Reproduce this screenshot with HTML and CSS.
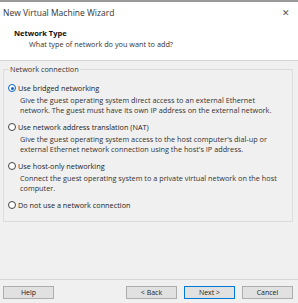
FILE: index.html
```html
<!DOCTYPE html>
<html lang="en">
<head>
    <meta charset="UTF-8">
    <title>New Virtual Machine Wizard</title>
    <link rel="stylesheet" href="styles.css">
</head>
<body>
<div class="wizard">
    <div class="top">
        <div class="titlebar">
            <span class="title">New Virtual Machine Wizard</span>
            <span class="close">&#x2715;</span>
        </div>
        <div class="header">
            <div class="heading">Network Type</div>
            <div class="subheading">What type of network do you want to add?</div>
        </div>
    </div>

    <div class="body">
        <fieldset class="group">
            <legend>Network connection</legend>

            <div class="option">
                <label class="radio-row"><span class="radio checked"></span>Use bridged networking</label>
                <p class="desc">Give the guest operating system direct access to an external Ethernet network. The guest must have its own IP address on the external network.</p>
            </div>
            <div class="option">
                <label class="radio-row"><span class="radio"></span>Use network address translation (NAT)</label>
                <p class="desc">Give the guest operating system access to the host computer's dial-up or external Ethernet network connection using the host's IP address.</p>
            </div>
            <div class="option">
                <label class="radio-row"><span class="radio"></span>Use host-only networking</label>
                <p class="desc">Connect the guest operating system to a private virtual network on the host computer.</p>
            </div>
            <div class="option">
                <label class="radio-row"><span class="radio"></span>Do not use a network connection</label>
            </div>
        </fieldset>
    </div>

    <div class="footer">
        <button class="btn">Help</button>
        <div class="nav">
            <button class="btn">&lt; Back</button>
            <button class="btn default">Next &gt;</button>
            <button class="btn">Cancel</button>
        </div>
    </div>
</div>
</body>
</html>
```

FILE: styles.css
```css
html, body {
    margin: 0;
    padding: 0;
}
body {
    font-family: "Open Sans", "Noto Sans", sans-serif;
    font-size: 7.3px;
    color: #222;
    background: #f0f0f0;
}
.wizard {
    width: 298px;
    height: 303px;
    display: flex;
    flex-direction: column;
    overflow: hidden;
}
.top {
    background: white;
    border-top: 2px solid #9a9a9a;
    border-bottom: 1px solid #d6d6d6;
}
.titlebar {
    display: flex;
    justify-content: space-between;
    align-items: center;
    height: 21px;
    padding: 0 8px 0 3px;
}
.title {
    font-size: 8.5px;
    color: #333;
}
.close {
    font-size: 9px;
    color: #555;
}
.header {
    padding: 5px 0 10px 14px;
    height: 22px;
}
.heading {
    font-weight: bold;
    font-size: 7.5px;
    color: #111;
}
.subheading {
    padding-left: 15px;
    margin-top: 1px;
    color: #333;
}
.body {
    padding: 3px 5px 0 3px;
}
.group {
    margin: 0;
    padding: 3px 0 11px 4px;
    border: 1px solid #dcdcdc;
    min-inline-size: 0;
}
.group legend {
    padding: 0 1px;
    margin-left: 1px;
    color: #333;
}
.option {
    margin-top: 7px;
}
.option:first-of-type {
    margin-top: 6px;
}
.radio-row {
    display: flex;
    align-items: center;
    gap: 2px;
    color: #222;
}
.radio {
    width: 8px;
    height: 8px;
    border: 1px solid #444;
    border-radius: 50%;
    background: white;
    box-sizing: border-box;
    position: relative;
}
.radio.checked {
    border-color: #0a64c8;
}
.radio.checked::after {
    content: "";
    position: absolute;
    left: 1.5px;
    top: 1.5px;
    width: 3px;
    height: 3px;
    border-radius: 50%;
    background: #0a64c8;
}
.desc {
    margin: 2px 0 0 12px;
    max-width: 257px;
    line-height: 10px;
    color: #333;
}
.footer {
    margin-top: auto;
    border-top: 1px solid #d6d6d6;
    padding: 6px 5px 4px 3px;
    display: flex;
    justify-content: space-between;
}
.nav {
    display: flex;
    gap: 7px;
}
.btn {
    width: 51px;
    height: 13px;
    padding: 0;
    font-family: inherit;
    font-size: 7px;
    color: #222;
    background: #e1e1e1;
    border: 1px solid #adadad;
}
.btn.default {
    border-color: #0078d7;
}
```
